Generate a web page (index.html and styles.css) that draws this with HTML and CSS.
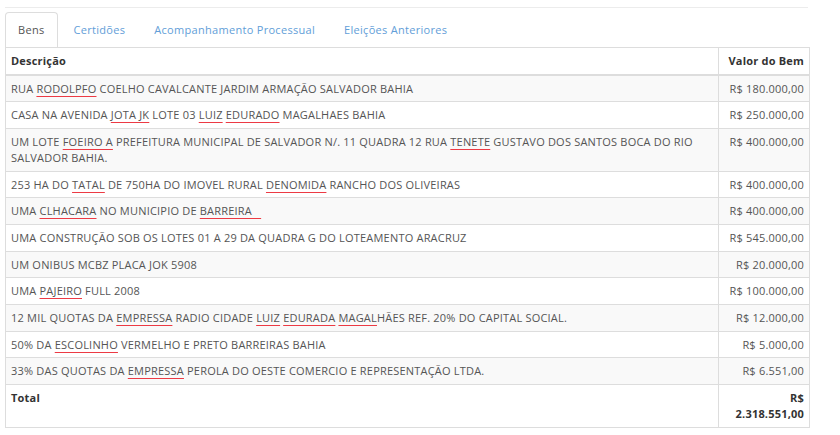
FILE: index.html
```html
<!DOCTYPE html>
<html lang="pt-BR">
<head>
<meta charset="utf-8">
<title>Bens</title>
<link rel="stylesheet" href="styles.css">
</head>
<body>
<div class="page">
  <div class="topline"></div>
  <ul class="tabs">
    <li class="tab active"><a>Bens</a></li>
    <li class="tab"><a>Certidões</a></li>
    <li class="tab"><a>Acompanhamento Processual</a></li>
    <li class="tab"><a>Eleições Anteriores</a></li>
  </ul>
  <table class="bens">
    <colgroup><col class="c-desc"><col class="c-val"></colgroup>
    <thead>
      <tr><th>Descrição</th><th class="num">Valor do Bem</th></tr>
    </thead>
    <tbody>
      <tr><td>RUA <span class="sp">RODOLPFO</span> COELHO CAVALCANTE JARDIM ARMAÇÃO SALVADOR BAHIA</td><td class="num">R$ 180.000,00</td></tr>
      <tr><td>CASA NA AVENIDA <span class="sp">JOTA JK</span> LOTE 03 <span class="sp">LUIZ</span> <span class="sp">EDURADO</span> MAGALHAES BAHIA</td><td class="num">R$ 250.000,00</td></tr>
      <tr><td>UM LOTE <span class="sp">FOEIRO A</span> PREFEITURA MUNICIPAL DE SALVADOR N/. 11 QUADRA 12 RUA <span class="sp">TENETE</span> GUSTAVO DOS SANTOS BOCA DO RIO SALVADOR BAHIA.</td><td class="num">R$ 400.000,00</td></tr>
      <tr><td>253 HA DO <span class="sp">TATAL</span> DE 750HA DO IMOVEL RURAL <span class="sp">DENOMIDA</span> RANCHO DOS OLIVEIRAS</td><td class="num">R$ 400.000,00</td></tr>
      <tr><td>UMA <span class="sp">CLHACARA</span> NO MUNICIPIO DE <span class="sp">BARREIRA&nbsp;&nbsp;&nbsp;</span></td><td class="num">R$ 400.000,00</td></tr>
      <tr><td>UMA CONSTRUÇÃO SOB OS LOTES 01 A 29 DA QUADRA G DO LOTEAMENTO ARACRUZ</td><td class="num">R$ 545.000,00</td></tr>
      <tr><td>UM ONIBUS MCBZ PLACA JOK 5908</td><td class="num">R$ 20.000,00</td></tr>
      <tr><td>UMA <span class="sp">PAJEIRO</span> FULL 2008</td><td class="num">R$ 100.000,00</td></tr>
      <tr><td>12 MIL QUOTAS DA <span class="sp">EMPRESSA</span> RADIO CIDADE <span class="sp">LUIZ</span> <span class="sp">EDURADA</span> <span class="sp">MAGAL</span>HÃES REF. 20% DO CAPITAL SOCIAL.</td><td class="num">R$ 12.000,00</td></tr>
      <tr><td>50% DA <span class="sp">ESCOLINHO</span> VERMELHO E PRETO BARREIRAS BAHIA</td><td class="num">R$ 5.000,00</td></tr>
      <tr><td>33% DAS QUOTAS DA <span class="sp">EMPRESSA</span> PEROLA DO OESTE COMERCIO E REPRESENTAÇÃO LTDA.</td><td class="num">R$ 6.551,00</td></tr>
    </tbody>
    <tfoot>
      <tr><th>Total</th><th class="num">R$ 2.318.551,00</th></tr>
    </tfoot>
  </table>
</div>
</body>
</html>
```

FILE: styles.css
```css
html, body {
  margin: 0;
  background: #fff;
}
body {
  font-family: "Open Sans", "DejaVu Sans", sans-serif;
  font-size: 11px;
  line-height: 1.42857;
  color: #555;
}
.page {
  width: 804px;
  padding: 7px 0 0 5px;
}
.topline {
  width: 803px;
  height: 1px;
  background: #ececec;
}
.tabs {
  display: flex;
  list-style: none;
  margin: 4px 0 0;
  padding: 0;
}
.tab a {
  display: block;
  margin-right: 2px;
  padding: 9px 13px 9px 12px;
  border: 1px solid transparent;
  border-bottom: 0;
  border-radius: 4px 4px 0 0;
  color: #629ed8;
  line-height: 16px;
  letter-spacing: 0.3px;
}
.tab.active a {
  border-color: #ddd;
  color: #555;
}
.bens {
  width: 804px;
  border-collapse: collapse;
  table-layout: fixed;
  border: 1px solid #ddd;
  letter-spacing: 0.2px;
}
.c-desc { width: 713px; }
.c-val { width: 91px; }
.bens th, .bens td {
  padding: 5px;
  border: 1px solid #ddd;
  text-align: left;
  vertical-align: top;
}
.bens th {
  color: #333;
  font-weight: bold;
}
.bens thead th {
  border-bottom-width: 2px;
}
.bens tbody tr:nth-child(odd) td {
  background: #f9f9f9;
}
.bens .num {
  text-align: right;
}
.sp {
  text-decoration: underline;
  text-decoration-color: #ec3a44;
  text-decoration-thickness: 1px;
  text-underline-offset: 3px;
  text-decoration-skip-ink: none;
}
```
